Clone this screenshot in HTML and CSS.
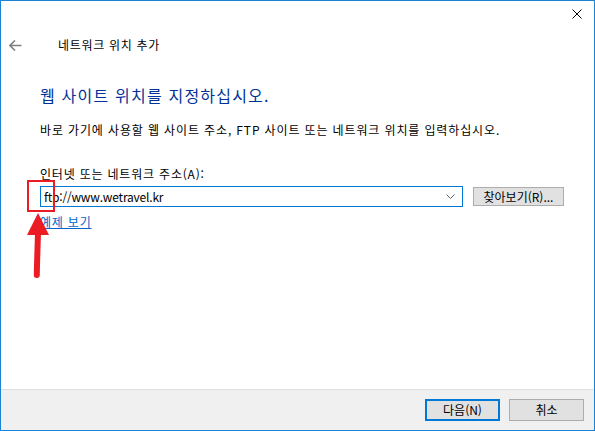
FILE: index.html
```html
<!DOCTYPE html>
<html lang="ko">
<head>
<meta charset="utf-8">
<link rel="stylesheet" href="styles.css">
</head>
<body>
<div class="window">
  <div class="titlebar">
    <div class="close">
      <svg width="10" height="10" viewBox="0 0 10 10"><path d="M0.5 0.5L9.5 9.5M9.5 0.5L0.5 9.5" stroke="#000" stroke-width="1" fill="none"/></svg>
    </div>
  </div>
  <div class="nav">
    <svg class="back" width="13" height="11" viewBox="0 0 13 11"><path d="M1 5.5H12.5M6 0.5L1 5.5L6 10.5" stroke="#808080" stroke-width="1.6" fill="none"/></svg>
    <span class="title">네트워크 위치 추가</span>
  </div>
  <div class="main">
    <h1 class="instruction">웹 사이트 위치를 지정하십시오.</h1>
    <p class="desc">바로 가기에 사용할 웹 사이트 주소, FTP 사이트 또는 네트워크 위치를 입력하십시오.</p>
    <div class="label">인터넷 또는 네트워크 주소(A):</div>
    <div class="row">
      <div class="combo">
        <span class="value">ftp://www.wetravel.kr</span>
        <svg class="chev" width="9" height="5" viewBox="0 0 9 5"><path d="M0.5 0.5L4.5 4.5L8.5 0.5" stroke="#606060" stroke-width="1" fill="none"/></svg>
      </div>
      <div class="btn browse">찾아보기(R)...</div>
    </div>
    <a class="link" href="#">예제 보기</a>
  </div>
  <div class="footer">
    <div class="btn default">다음(N)</div>
    <div class="btn">취소</div>
  </div>
  <div class="mark-box"></div>
  <svg class="mark-arrow" width="30" height="66" viewBox="0 0 30 66"><polygon points="11,0 0,22 22,22" fill="#ec1c24"/><path d="M11 20 C10.5 35, 10 50, 9.8 62" stroke="#ec1c24" stroke-width="6" fill="none" stroke-linecap="round"/></svg>
</div>
</body>
</html>
```

FILE: styles.css
```css
* { box-sizing: border-box; }
html, body { margin: 0; padding: 0; background: #fff; }
body { font-family: "Noto Sans CJK KR", "Noto Sans", sans-serif; font-size: 12px; color: #000; letter-spacing: 0.8px; }
.window {
  position: relative;
  width: 595px; height: 431px;
  border: 1px solid #1883d7;
  display: flex; flex-direction: column;
  background: #fff;
  overflow: hidden;
}
.titlebar { height: 29px; display: flex; justify-content: flex-end; }
.close { width: 46px; height: 28px; display: flex; align-items: center; justify-content: center; margin-top: -1px; margin-right: -6px; }
.close svg { display: block; }
.nav { height: 30px; display: flex; align-items: center; }
.back { margin-left: 8px; display: block; }
.title { margin-left: 36px; font-size: 12px; color: #000; line-height: 16px; letter-spacing: 0.7px; }
.main { padding-left: 39px; flex: 1; display: flex; flex-direction: column; align-items: flex-start; }
.instruction { margin: 25px 0 0 0; font-weight: normal; font-size: 16px; line-height: 20px; color: #003399; letter-spacing: 1.2px; }
.desc { margin: 17px 0 0 0; line-height: 16px; letter-spacing: 0.87px; }
.label { margin-top: 28px; line-height: 16px; }
.row { margin-top: 4px; display: flex; align-items: center; gap: 10px; }
.combo { width: 423px; height: 21px; border: 1px solid #0078d7; display: flex; align-items: center; justify-content: space-between; padding: 0 7px 0 3px; }
.value { font-size: 12px; line-height: 16px; letter-spacing: -0.2px; }
.chev { display: block; }
.btn { height: 19px; border: 1px solid #adadad; background: #e1e1e1; display: flex; align-items: center; justify-content: center; font-size: 12px; line-height: 16px; letter-spacing: 0; }
.browse { width: 91px; }
.link { margin-top: 7px; color: #0066cc; text-decoration: underline; line-height: 16px; }
.footer { height: 41px; border-top: 1px solid #dfdfdf; background: #f0f0f0; display: flex; justify-content: flex-end; align-items: flex-start; padding: 9px 10px 0 0; gap: 9px; }
.footer .btn { width: 75px; height: 22px; }
.footer .btn.default { border: 2px solid #0078d7; }
.mark-box { position: absolute; left: 26px; top: 179px; width: 28px; height: 32px; border: 2px solid #ec1c24; }
.mark-arrow { position: absolute; left: 26px; top: 212px; }
```
